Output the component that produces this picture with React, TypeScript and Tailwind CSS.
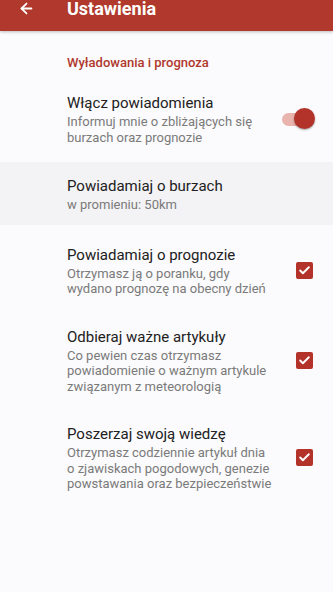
import { ArrowLeft, Check } from "lucide-react";

type Row = {
  title: string;
  lines: string[];
  control?: "switch" | "check";
  shaded?: boolean;
  pad: string;
};

const rows: Row[] = [
  {
    title: "Włącz powiadomienia",
    lines: ["Informuj mnie o zbliżających się", "burzach oraz prognozie"],
    control: "switch",
    pad: "pt-[15px] pb-[17px]",
  },
  {
    title: "Powiadamiaj o burzach",
    lines: ["w promieniu: 50km"],
    shaded: true,
    pad: "pt-[14px] pb-[12px]",
  },
  {
    title: "Powiadamiaj o prognozie",
    lines: ["Otrzymasz ją o poranku, gdy", "wydano prognozę na obecny dzień"],
    control: "check",
    pad: "pt-[20px] pb-[15px]",
  },
  {
    title: "Odbieraj ważne artykuły",
    lines: [
      "Co pewien czas otrzymasz",
      "powiadomienie o ważnym artykule",
      "związanym z meteorologią",
    ],
    control: "check",
    pad: "py-[15px]",
  },
  {
    title: "Poszerzaj swoją wiedzę",
    lines: [
      "Otrzymasz codziennie artykuł dnia",
      "o zjawiskach pogodowych, genezie",
      "powstawania oraz bezpieczeństwie",
    ],
    control: "check",
    pad: "py-[15px]",
  },
];

function Toggle() {
  return (
    <div className="relative w-[34px] h-[22px] flex items-center">
      <div className="w-[26px] h-[13px] rounded-full bg-[#e9b3ae]" />
      <div className="absolute right-[1px] top-0 w-[21px] h-[21px] rounded-full bg-[#b3322a] shadow-[0_1px_2px_rgba(0,0,0,0.35)]" />
    </div>
  );
}

function CheckBox() {
  return (
    <div className="w-[17px] h-[17px] mr-[3px] rounded-[2px] bg-[#b3322a] flex items-center justify-center">
      <Check size={13} strokeWidth={3.5} color="#ffffff" />
    </div>
  );
}

function SettingRow({ row }: { row: Row }) {
  return (
    <div
      className={`flex items-center pl-[67px] pr-[17px] ${row.pad} ${
        row.shaded ? "bg-[#f3f2f4]" : ""
      }`}
    >
      <div className="flex-1">
        <div className="text-[15px] leading-[20px] text-[#212121]">{row.title}</div>
        <div className="text-[13px] leading-[15.5px] text-[#7a7a7a] mt-[1px]">
          {row.lines.map((l) => (
            <div key={l}>{l}</div>
          ))}
        </div>
      </div>
      <div className="w-[36px] flex justify-end">
        {row.control === "switch" && <Toggle />}
        {row.control === "check" && <CheckBox />}
      </div>
    </div>
  );
}

export default function App() {
  return (
    <div
      className="w-[333px] h-[592px] bg-[#fbfafc] overflow-hidden"
      style={{ fontFamily: "Roboto, 'Noto Sans', sans-serif" }}
    >
      <div className="h-[31px] bg-[#b0382c] flex items-center pl-[18px] shadow-[0_1px_3px_rgba(0,0,0,0.25)] relative">
        <div className="flex items-center -mt-[15px]">
          <ArrowLeft size={17} strokeWidth={2.5} color="#ffffff" />
          <span className="ml-[32px] text-[18px] font-bold text-white">Ustawienia</span>
        </div>
      </div>
      <div className="pl-[67px] pt-[23px] pb-[6px] text-[13px] leading-[18px] font-medium text-[#b0382c]">
        Wyładowania i prognoza
      </div>
      <div className="flex flex-col">
        {rows.map((r) => (
          <SettingRow key={r.title} row={r} />
        ))}
      </div>
    </div>
  );
}
